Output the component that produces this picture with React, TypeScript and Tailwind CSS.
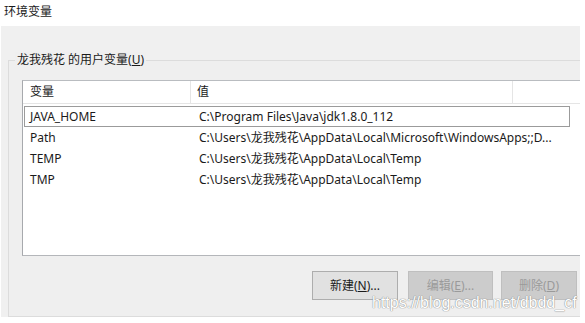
import React from "react";

const ROWS: { name: string; value: string }[] = [
  { name: "JAVA_HOME", value: "C:\\Program Files\\Java\\jdk1.8.0_112" },
  { name: "Path", value: "C:\\Users\\龙我残花\\AppData\\Local\\Microsoft\\WindowsApps;;D..." },
  { name: "TEMP", value: "C:\\Users\\龙我残花\\AppData\\Local\\Temp" },
  { name: "TMP", value: "C:\\Users\\龙我残花\\AppData\\Local\\Temp" },
];

const FONT = "font-['Noto_Sans','Noto_Sans_CJK_SC',sans-serif]";

export default function App() {
  return (
    <div className={`relative flex h-[323px] w-[585px] flex-col overflow-hidden bg-white text-[12px] text-[#1a1a1a] ${FONT}`}>
      <div className="h-[26px] pl-[4px] pt-[4px] leading-[16px]">环境变量</div>

      <div className="ml-[1px] flex h-[291px] w-[579px] flex-col overflow-hidden bg-[#f0f0f0] pl-[7px] pt-[34px]">
        {/* group box */}
        <div className="relative flex h-[258px] w-[600px] flex-col border border-[#dcdcdc] bg-[#efefef] pl-[13px] pt-[19px]">
          <span className="absolute left-[6px] top-[-9px] bg-[#efefef] px-[2px] leading-[16px]">
            龙我残花 的用户变量(<span className="underline">U</span>)
          </span>

          {/* list */}
          <div className="flex h-[176px] w-[600px] flex-col border-t border-l border-b border-t-[#b9bcc0] border-l-[#a7a9ad] border-b-[#b4b6ba] bg-white">
            <div className="flex h-[23px] border-b border-[#e5e5e5]">
              <div className="flex w-[168px] items-center border-r border-[#e5e5e5] pl-[7px]">变量</div>
              <div className="flex w-[322px] items-center border-r border-[#e5e5e5] pl-[6px]">值</div>
            </div>
            <div className="flex flex-col pt-[2px]">
              {ROWS.map((r, i) => (
                <div
                  key={r.name}
                  className={`ml-[1px] flex h-[21px] w-[546px] items-center ${i === 0 ? "border border-[#9b9b9b]" : "border border-transparent"}`}
                >
                  <span className="w-[168px] shrink-0 pl-[5px]">{r.name}</span>
                  <span className="whitespace-nowrap pl-[6px]">{r.value}</span>
                </div>
              ))}
            </div>
          </div>

          {/* buttons */}
          <div className="mt-[15px] flex pl-[290px]">
            <button className="h-[29px] w-[86px] border border-[#adadad] bg-[#e1e1e1] text-[#1a1a1a]">
              新建(<span className="underline">N</span>)...
            </button>
            <button className="ml-[10px] h-[29px] w-[85px] border border-[#bfbfbf] bg-[#cccccc] text-[#9a9a9a]">
              编辑(<span className="underline">E</span>)...
            </button>
            <button className="ml-[8px] h-[29px] w-[76px] border border-[#bfbfbf] bg-[#cccccc] text-[#9a9a9a]">
              删除(<span className="underline">D</span>)
            </button>
          </div>
        </div>
      </div>

      {/* watermark */}
      <span className="absolute left-[372px] top-[294px] font-['Liberation_Sans',sans-serif] text-[16px] leading-[18px] text-white [text-shadow:0_0_1px_#888,0_0_1px_#888]">
        https://blog.csdn.net/dbdd_cf
      </span>
    </div>
  );
}
